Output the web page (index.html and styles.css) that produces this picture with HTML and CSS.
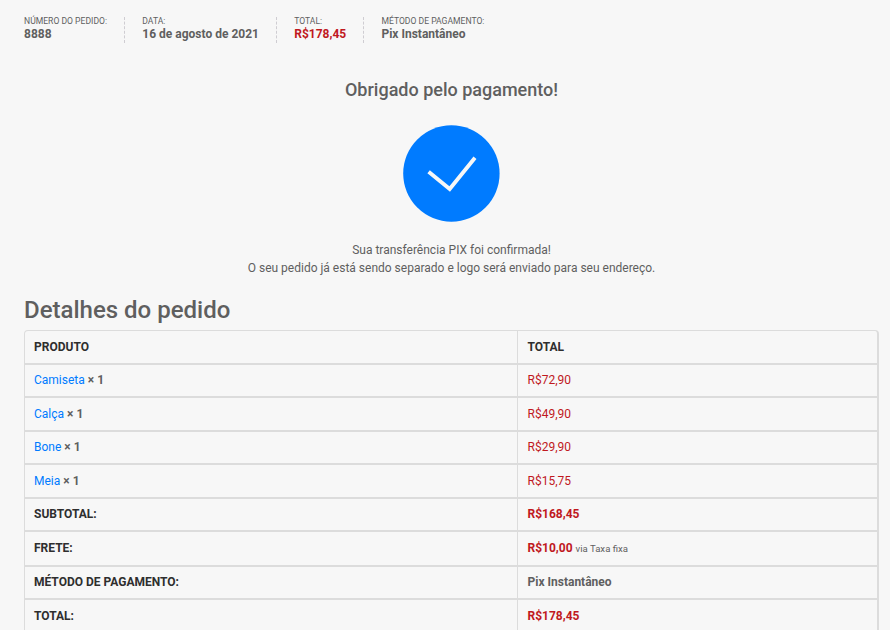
FILE: index.html
```html
<!DOCTYPE html>
<html lang="pt-BR">
<head>
<meta charset="utf-8">
<title>Pedido recebido</title>
<link rel="stylesheet" href="styles.css">
</head>
<body>
<main class="order">
  <ul class="overview">
    <li>Número do pedido:<strong>8888</strong></li>
    <li>Data:<strong>16 de agosto de 2021</strong></li>
    <li>Total:<strong class="amount">R$178,45</strong></li>
    <li>Método de pagamento:<strong>Pix Instantâneo</strong></li>
  </ul>
  <section class="thanks">
    <h3>Obrigado pelo pagamento!</h3>
    <svg class="check" width="98" height="98" viewBox="0 0 98 98" aria-hidden="true">
      <circle cx="48.4" cy="48.5" r="48.2" fill="#007bff"/>
      <path d="M25.6 46.8 46.7 64 72 32.8" fill="none" stroke="#f7f7f7" stroke-width="3.9"/>
    </svg>
    <p>Sua transferência PIX foi confirmada!<br>O seu pedido já está sendo separado e logo será enviado para seu endereço.</p>
  </section>
  <h2>Detalhes do pedido</h2>
  <table class="details">
    <thead>
      <tr class="row tall"><th>Produto</th><th>Total</th></tr>
    </thead>
    <tbody>
      <tr class="row"><td><a>Camiseta</a> <strong>× 1</strong></td><td class="amount">R$72,90</td></tr>
      <tr class="row tall"><td><a>Calça</a> <strong>× 1</strong></td><td class="amount">R$49,90</td></tr>
      <tr class="row"><td><a>Bone</a> <strong>× 1</strong></td><td class="amount">R$29,90</td></tr>
      <tr class="row tall"><td><a>Meia</a> <strong>× 1</strong></td><td class="amount">R$15,75</td></tr>
    </tbody>
    <tfoot>
      <tr class="row"><th>Subtotal:</th><td><strong class="amount">R$168,45</strong></td></tr>
      <tr class="row shipping"><th>Frete:</th><td><strong class="amount">R$10,00</strong> <small>via Taxa fixa</small></td></tr>
      <tr class="row"><th>Método de pagamento:</th><td><strong>Pix Instantâneo</strong></td></tr>
      <tr class="row tall"><th>Total:</th><td><strong class="amount">R$178,45</strong></td></tr>
    </tfoot>
  </table>
</main>
</body>
</html>
```
FILE: styles.css
```css
* { box-sizing: border-box; }
html { overflow: hidden; }
body {
  margin: 0;
  height: 630px;
  overflow: hidden;
  background: #f7f7f7;
  color: #5f5f5f;
  font: 12px/18px Roboto, sans-serif;
}
.order { width: 855px; margin-left: 24px; padding-top: 17px; }
.overview {
  display: flex;
  height: 26px;
  margin: 0;
  padding: 0;
  list-style: none;
}
.overview li {
  padding-right: 17.1px;
  margin-right: 17.2px;
  border-right: 1px dashed #cfcdd2;
  font-size: 8.6px;
  line-height: 9px;
  text-transform: uppercase;
  white-space: nowrap;
}
.overview li:last-child { border: 0; margin: 0; padding: 0; }
.overview strong {
  display: block;
  font-size: 12px;
  line-height: 16px;
  text-transform: none;
}
.amount { color: #c0191e; }
.thanks { text-align: center; }
h2, h3 { margin: 0; font-weight: 500; }
h3 { padding-top: 36px; font-size: 18px; line-height: 22px; }
.check { display: block; margin: 24px auto 0; }
.thanks p { margin: 18px 0 0; }
h2 { margin-top: 19px; height: 34px; font-size: 24px; line-height: 28px; }
.details {
  display: block;
  border: 1px solid #dcdcdc;
  border-right-width: 2px;
  border-radius: 4px;
}
.details thead, .details tbody, .details tfoot { display: block; }
.row {
  display: grid;
  grid-template-columns: 492px 1fr;
  height: 33px;
  border-bottom: 2px solid #dcdcdc;
}
.row.tall { height: 34px; }
.row.shipping { height: 35px; }
.row > * {
  padding: 6px 9px 0;
  text-align: left;
  line-height: 18px;
}
.row.tall > *, .row.shipping > * { padding-top: 7px; }
.row > * + * { padding-left: 9.5px; border-left: 1px solid #dcdcdc; }
.row th { color: #2e2e2e; text-transform: uppercase; font-weight: 700; }
.row a { color: #007bff; }
small { font-size: 9.6px; }
```
